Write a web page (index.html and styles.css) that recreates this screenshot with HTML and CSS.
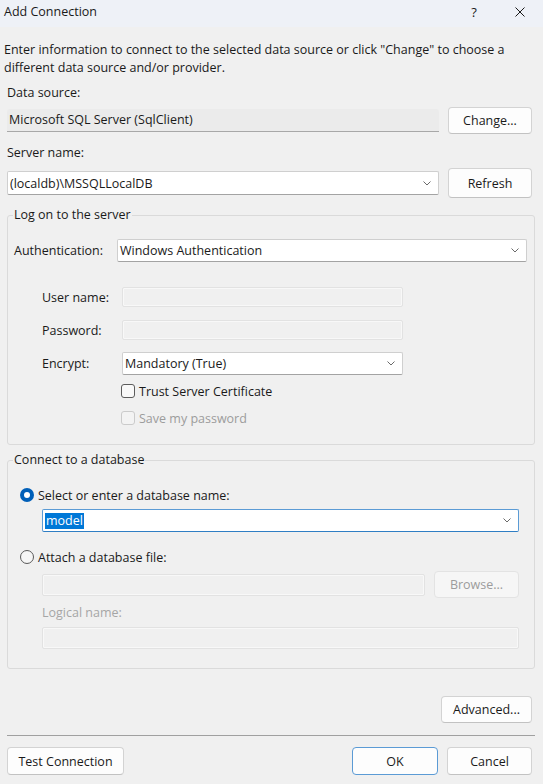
FILE: index.html
```html
<!DOCTYPE html>
<html lang="en">
<head>
    <meta charset="UTF-8">
    <title>Add Connection</title>
    <link rel="stylesheet" href="styles.css">
</head>
<body>
    <div class="titlebar">
        <span class="title">Add Connection</span>
        <span class="caption-btn">?</span>
        <span class="caption-btn">
            <svg width="10" height="10" viewBox="0 0 10 10"><path d="M0.5 0.5 L9.5 9.5 M9.5 0.5 L0.5 9.5" stroke="#1a1a1a" stroke-width="1"/></svg>
        </span>
    </div>

    <p class="intro">Enter information to connect to the selected data source or click "Change" to choose a<br>different data source and/or provider.</p>

    <!-- Data source -->
    <div class="field-label">Data source:</div>
    <div class="row">
        <div class="readonly-box">Microsoft SQL Server (SqlClient)</div>
        <button class="btn btn-side">Change...</button>
    </div>

    <!-- Server name -->
    <div class="field-label field-label-server">Server name:</div>
    <div class="row row-server">
        <div class="combo combo-server">
            <span>(localdb)\MSSQLLocalDB</span>
            <svg class="chevron" width="8" height="5" viewBox="0 0 8 5"><path d="M0.5 0.5 L4 4 L7.5 0.5" fill="none" stroke="#6a6a6a"/></svg>
        </div>
        <button class="btn btn-side btn-refresh">Refresh</button>
    </div>

    <!-- Log on group -->
    <fieldset class="group group-logon">
        <legend>Log on to the server</legend>
        <div class="auth-row">
            <label class="auth-label">Authentication:</label>
            <div class="combo combo-auth">
                <span>Windows Authentication</span>
                <svg class="chevron" width="8" height="5" viewBox="0 0 8 5"><path d="M0.5 0.5 L4 4 L7.5 0.5" fill="none" stroke="#6a6a6a"/></svg>
            </div>
        </div>
        <div class="cred-row cred-user">
            <label class="cred-label">User name:</label>
            <div class="disabled-box cred-box"></div>
        </div>
        <div class="cred-row cred-pass">
            <label class="cred-label">Password:</label>
            <div class="disabled-box cred-box"></div>
        </div>
        <div class="cred-row cred-encrypt">
            <label class="cred-label">Encrypt:</label>
            <div class="combo combo-encrypt">
                <span>Mandatory (True)</span>
                <svg class="chevron" width="8" height="5" viewBox="0 0 8 5"><path d="M0.5 0.5 L4 4 L7.5 0.5" fill="none" stroke="#6a6a6a"/></svg>
            </div>
        </div>
        <div class="check-row check-trust">
            <span class="checkbox"></span>
            <span>Trust Server Certificate</span>
        </div>
        <div class="check-row check-save disabled">
            <span class="checkbox"></span>
            <span>Save my password</span>
        </div>
    </fieldset>

    <!-- Connect to a database group -->
    <fieldset class="group group-db">
        <legend>Connect to a database</legend>
        <div class="radio-row radio-first">
            <svg class="radio" width="14" height="14" viewBox="0 0 14 14"><circle cx="7" cy="7" r="7" fill="#005fb8"/><circle cx="7" cy="7" r="3" fill="#fff"/></svg>
            <span>Select or enter a database name:</span>
        </div>
        <div class="combo combo-db">
            <span class="selected">model</span>
            <svg class="chevron" width="8" height="5" viewBox="0 0 8 5"><path d="M0.5 0.5 L4 4 L7.5 0.5" fill="none" stroke="#6a6a6a"/></svg>
        </div>
        <div class="radio-row radio-second">
            <svg class="radio" width="14" height="14" viewBox="0 0 14 14"><circle cx="7" cy="7" r="6.5" fill="#f6f6f6" stroke="#5a5a5a"/></svg>
            <span>Attach a database file:</span>
        </div>
        <div class="file-row">
            <div class="disabled-box file-box"></div>
            <button class="btn btn-disabled btn-browse">Browse...</button>
        </div>
        <div class="logical-label">Logical name:</div>
        <div class="disabled-box logical-box"></div>
    </fieldset>

    <div class="advanced-row">
        <button class="btn btn-advanced">Advanced...</button>
    </div>

    <hr class="separator">

    <div class="footer">
        <button class="btn btn-test">Test Connection</button>
        <div class="footer-right">
            <button class="btn btn-ok">OK</button>
            <button class="btn btn-cancel">Cancel</button>
        </div>
    </div>
</body>
</html>
```

FILE: styles.css
```css
body {
    margin: 0;
    width: 543px;
    height: 784px;
    background-color: #f0f0f0;
    font-family: "Open Sans", "Noto Sans", sans-serif;
    font-size: 12.5px;
    color: #1a1a1a;
    overflow: hidden;
}

/* Title bar */
.titlebar {
    height: 27px;
    display: flex;
    background-color: #eef1f7;
}

.title {
    flex: 1;
    line-height: 24px;
    padding-left: 4px;
    font-size: 12.5px;
}

.caption-btn {
    width: 46px;
    height: 24px;
    display: flex;
    align-items: center;
    justify-content: center;
    font-size: 13px;
}

.intro {
    margin: 14px 4px 0;
    line-height: 18px;
}

.field-label {
    margin-top: 7px;
    padding-left: 7px;
    line-height: 18px;
}

.field-label-server {
    margin-top: 10px;
}

.row {
    display: flex;
    align-items: center;
    margin-top: 5px;
    padding-left: 7px;
}

.row-server {
    margin-top: 6px;
}

.readonly-box {
    width: 430px;
    height: 22px;
    line-height: 22px;
    padding-left: 2px;
    background-color: #ebebeb;
    border-bottom: 1px solid #a8a8a8;
    border-radius: 3px 3px 0 0;
}

/* Buttons */
.btn {
    font-family: inherit;
    font-size: 12.5px;
    color: #1a1a1a;
    background-color: #fdfdfd;
    border: 1px solid #d3d3d3;
    border-bottom-color: #c2c2c2;
    border-radius: 4px;
    padding: 0;
    height: 27px;
}

.btn-side {
    width: 84px;
    margin-left: 9px;
}

.btn-refresh {
    height: 30px;
}

.btn-disabled {
    color: #9c9c9c;
    background-color: #f6f6f6;
    border-color: #e3e3e3;
}

/* Combo boxes */
.combo {
    box-sizing: border-box;
    display: flex;
    align-items: center;
    justify-content: space-between;
    height: 24px;
    padding: 0 7px 0 2px;
    background-color: #fff;
    border: 1px solid #cfcfcf;
    border-bottom-color: #a3a3a3;
    border-radius: 2px;
}

.combo-server {
    width: 432px;
}

.chevron {
    flex-shrink: 0;
}

/* Group boxes */
.group {
    margin: 8px 8px 0 7px;
    padding: 0 5px 17px;
    border: 1px solid #dadada;
    border-radius: 3px;
}

.group legend {
    padding: 0 1px;
    line-height: 18px;
}

.auth-row {
    display: flex;
    align-items: center;
    margin-top: 15px;
}

.auth-label {
    width: 103px;
    padding-left: 1px;
}

.combo-auth {
    width: 410px;
    height: 23px;
}

.cred-row {
    display: flex;
    align-items: center;
    padding-left: 29px;
}

.cred-label {
    width: 80px;
}

.cred-user {
    margin-top: 25px;
}

.cred-pass {
    margin-top: 13px;
}

.cred-encrypt {
    margin-top: 12px;
}

.disabled-box {
    box-sizing: border-box;
    background-color: #f0f0f0;
    border: 1px solid #e2e2e2;
    box-shadow: inset 0 0 0 1px #f8f8f8;
    border-radius: 2px;
}

.cred-box {
    width: 281px;
    height: 20px;
}

.combo-encrypt {
    width: 281px;
    height: 23px;
}

.check-row {
    display: flex;
    align-items: center;
    gap: 4px;
    height: 18px;
    padding-left: 108px;
}

.check-trust {
    margin-top: 7px;
}

.check-save {
    margin-top: 9px;
}

.checkbox {
    box-sizing: border-box;
    width: 14px;
    height: 14px;
    border: 1px solid #5c5c5c;
    border-radius: 3px;
    background-color: #f9f9f9;
}

.disabled {
    color: #9c9c9c;
}

.disabled .checkbox {
    border-color: #cbcbcb;
    background-color: #f3f3f3;
}

/* Database group */
.group-db {
    margin-top: 6px;
    padding-bottom: 19px;
}

.radio-row {
    display: flex;
    align-items: center;
    gap: 4px;
    height: 18px;
    padding-left: 7px;
}

.radio-first {
    margin-top: 17px;
}

.radio-second {
    margin-top: 16px;
}

.combo-db {
    width: 477px;
    height: 23px;
    margin: 5px 0 0 29px;
    border-color: #5b9bd5;
    border-bottom-color: #2f7ec4;
}

.selected {
    background-color: #0078d7;
    color: #fff;
    padding: 0 1px;
    line-height: 16px;
}

.file-row {
    display: flex;
    align-items: center;
    gap: 9px;
    margin: 5px 0 0 29px;
}

.file-box {
    width: 383px;
    height: 22px;
}

.btn-browse {
    width: 85px;
}

.logical-label {
    margin: 6px 0 0 29px;
    line-height: 18px;
    color: #a6a6a6;
}

.logical-box {
    width: 477px;
    height: 22px;
    margin: 5px 0 0 29px;
}

/* Bottom area */
.advanced-row {
    display: flex;
    justify-content: flex-end;
    margin-top: 27px;
    padding-right: 11px;
}

.btn-advanced {
    width: 91px;
}

.separator {
    margin: 12px 8px 0 7px;
    border: none;
    border-top: 1px solid #a0a0a0;
}

.footer {
    display: flex;
    justify-content: space-between;
    margin-top: 11px;
    padding: 0 11px 0 7px;
}

.footer .btn {
    height: 28px;
}

.footer-right {
    display: flex;
    gap: 9px;
}

.btn-test {
    width: 117px;
}

.btn-ok {
    width: 86px;
    border-color: #5b9bd5;
}

.btn-cancel {
    width: 85px;
}
```
